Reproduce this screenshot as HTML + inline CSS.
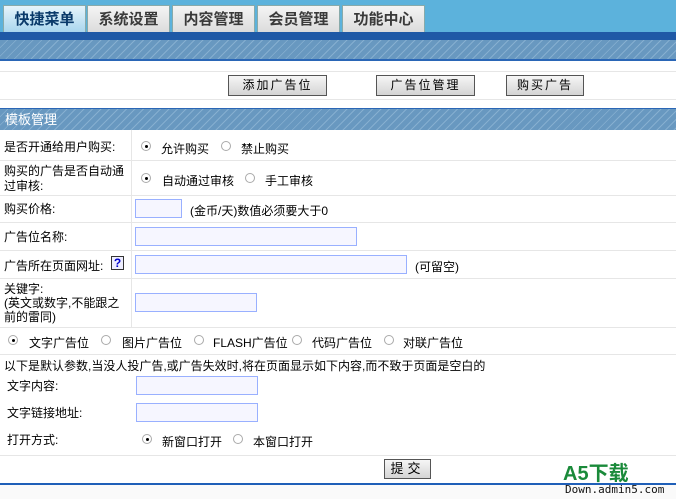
<!DOCTYPE html>
<html><head><meta charset="utf-8"><style>
*{margin:0;padding:0;box-sizing:border-box}
body{width:676px;height:499px;overflow:hidden;background:#fff;font-family:"Liberation Sans","Noto Sans CJK SC","WenQuanYi Zen Hei",sans-serif;font-size:12px;color:#000;position:relative}
.a{position:absolute;white-space:nowrap}
.tab{position:absolute;top:5px;height:27px;width:83px;background:linear-gradient(#f4f4f4,#dcdcdc);border:1px solid #8aa;border-bottom:none;font-size:15px;font-weight:bold;color:#3a3a3a;text-align:center;line-height:27px}
.hatch{background:repeating-linear-gradient(135deg,#6898c0 0 5px,#86afd0 5px 6px)}
.btn{position:absolute;top:75px;height:21px;border:1px solid #555;background:linear-gradient(#f6f6f6,#d4d4d4);text-align:center;line-height:19px;letter-spacing:2px}
.hl{position:absolute;left:0;width:676px;height:1px;background:#e6e6e6}
.inp{position:absolute;border:1px solid #99b0ff;background:#f6f6ff;height:19px}
.r{position:absolute;width:10px;height:10px;border-radius:50%;border:1px solid #aaa;background:#fff}
.r.on::after{content:"";position:absolute;left:2.5px;top:2.5px;width:3px;height:3px;border-radius:50%;background:#000}
</style></head><body>
<div class="a" style="left:0;top:0;width:676px;height:32px;background:#5cb2dc"></div>
<div class="tab" style="left:3px;background:linear-gradient(#e6f4fb,#a9d6ee);color:#0a3a6a">快捷菜单</div>
<div class="tab" style="left:87px">系统设置</div>
<div class="tab" style="left:172px">内容管理</div>
<div class="tab" style="left:257px">会员管理</div>
<div class="tab" style="left:342px">功能中心</div>
<div class="a" style="left:0;top:32px;width:676px;height:8px;background:#1f59a6"></div>
<div class="a hatch" style="left:0;top:40px;width:676px;height:21px;border-bottom:2px solid #2a66b6"></div>
<div class="hl" style="top:71px"></div>
<div class="btn" style="left:228px;width:99px">添加广告位</div>
<div class="btn" style="left:376px;width:99px">广告位管理</div>
<div class="btn" style="left:506px;width:78px">购买广告</div>
<div class="hl" style="top:99px"></div>
<div class="a" style="left:0;top:108px;width:676px;height:1px;background:#2a66b6"></div>
<div class="a hatch" style="left:0;top:109px;width:676px;height:21px;color:#fff;font-size:13px;line-height:21px;padding-left:5px">模板管理</div>
<div class="a" style="left:131px;top:130px;width:1px;height:197px;background:#e6e6e6"></div>
<div class="hl" style="top:160px"></div><div class="hl" style="top:195px"></div><div class="hl" style="top:222px"></div><div class="hl" style="top:250px"></div><div class="hl" style="top:278px"></div><div class="hl" style="top:327px"></div><div class="hl" style="top:354px"></div><div class="hl" style="top:455px"></div>
<div class="a" style="left:4px;top:138px">是否开通给用户购买:</div>
<div class="r on" style="left:141px;top:141px"></div><div class="a" style="left:161px;top:140px">允许购买</div>
<div class="r" style="left:221px;top:141px"></div><div class="a" style="left:241px;top:140px">禁止购买</div>
<div class="a" style="left:4px;top:164px;line-height:15px">购买的广告是否自动通<br>过审核:</div>
<div class="r on" style="left:141px;top:173px"></div><div class="a" style="left:162px;top:172px">自动通过审核</div>
<div class="r" style="left:245px;top:173px"></div><div class="a" style="left:265px;top:172px">手工审核</div>
<div class="a" style="left:4px;top:200px">购买价格:</div>
<div class="inp" style="left:135px;top:199px;width:47px"></div>
<div class="a" style="left:190px;top:202px">(金币/天)数值必须要大于0</div>
<div class="a" style="left:4px;top:228px">广告位名称:</div>
<div class="inp" style="left:135px;top:227px;width:222px"></div>
<div class="a" style="left:4px;top:257px">广告所在页面网址:</div>
<div class="a" style="left:111px;top:256px;width:13px;height:14px;border:1px solid #333;background:#eef;color:#00c;font-weight:bold;font-size:12px;line-height:12px;text-align:center">?</div>
<div class="inp" style="left:135px;top:255px;width:272px"></div>
<div class="a" style="left:415px;top:258px">(可留空)</div>
<div class="a" style="left:4px;top:282px;line-height:14px">关键字:<br>(英文或数字,不能跟之<br>前的雷同)</div>
<div class="inp" style="left:135px;top:293px;width:122px"></div>
<div class="r on" style="left:8px;top:335px"></div><div class="a" style="left:29px;top:334px">文字广告位</div>
<div class="r" style="left:101px;top:335px"></div><div class="a" style="left:122px;top:334px">图片广告位</div>
<div class="r" style="left:194px;top:335px"></div><div class="a" style="left:213px;top:334px">FLASH广告位</div>
<div class="r" style="left:292px;top:335px"></div><div class="a" style="left:312px;top:334px">代码广告位</div>
<div class="r" style="left:384px;top:335px"></div><div class="a" style="left:403px;top:334px">对联广告位</div>
<div class="a" style="left:4px;top:357px">以下是默认参数,当没人投广告,或广告失效时,将在页面显示如下内容,而不致于页面是空白的</div>
<div class="a" style="left:7px;top:377px">文字内容:</div>
<div class="inp" style="left:136px;top:376px;width:122px"></div>
<div class="a" style="left:7px;top:404px">文字链接地址:</div>
<div class="inp" style="left:136px;top:403px;width:122px"></div>
<div class="a" style="left:7px;top:431px">打开方式:</div>
<div class="r on" style="left:142px;top:434px"></div><div class="a" style="left:162px;top:433px">新窗口打开</div>
<div class="r" style="left:233px;top:434px"></div><div class="a" style="left:253px;top:433px">本窗口打开</div>
<div class="a" style="left:384px;top:459px;width:47px;height:20px;border:1px solid #555;background:linear-gradient(#f6f6f6,#d4d4d4);text-align:center;line-height:18px;font-size:13px;letter-spacing:4px">提交</div>
<div class="a" style="left:0;top:483px;width:676px;height:2px;background:#1f5fb8"></div>
<div class="a" style="left:0;top:485px;width:676px;height:14px;background:#fafafa"></div>
<div class="a" style="left:563px;top:464px;color:#1a8a3a;font-weight:bold;font-size:20px;line-height:20px">A5下载</div>
<div class="a" style="left:565px;top:483px;color:#111;font-size:11px;font-family:'DejaVu Sans Mono',monospace;line-height:13px">Down.admin5.com</div>
</body></html>
